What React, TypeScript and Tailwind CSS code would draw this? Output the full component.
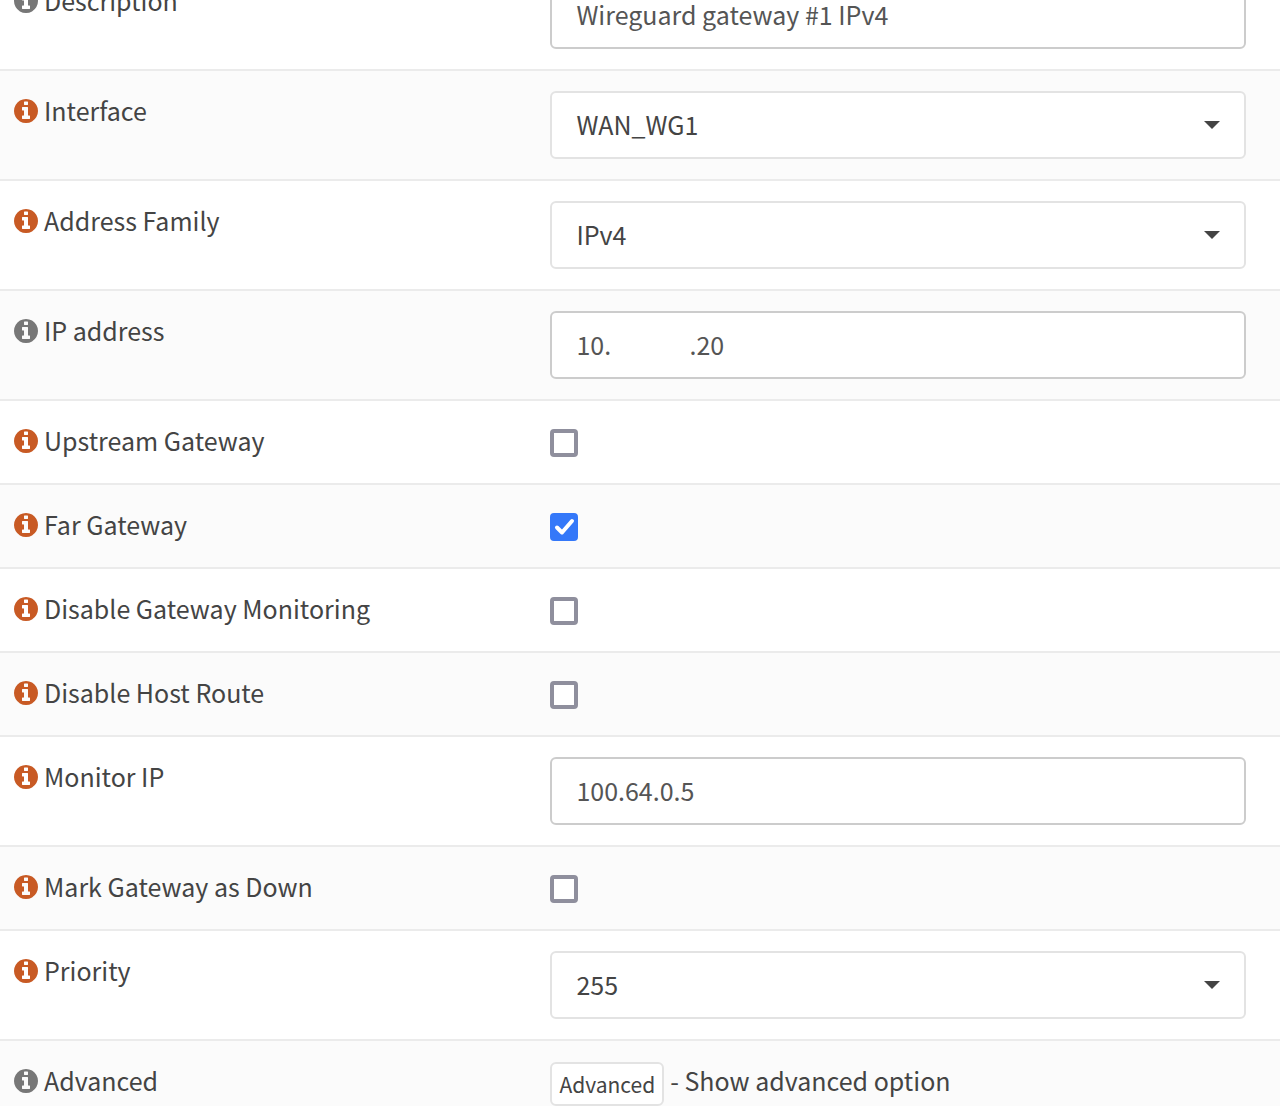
import type { ReactNode } from "react";

type Field = {
  id: string;
  label: string;
  kind: "text" | "select" | "checkbox" | "advanced";
  value?: string;
  checked?: boolean;
  muted?: boolean;
};

const fields: Field[] = [
  { id: "description", label: "Description", kind: "text", value: "Wireguard gateway #1 IPv4", muted: true },
  { id: "interface", label: "Interface", kind: "select", value: "WAN_WG1" },
  { id: "family", label: "Address Family", kind: "select", value: "IPv4" },
  { id: "ip", label: "IP address", kind: "text", value: "10." + " ".repeat(14) + ".20", muted: true },
  { id: "upstream", label: "Upstream Gateway", kind: "checkbox" },
  { id: "far", label: "Far Gateway", kind: "checkbox", checked: true },
  { id: "nomonitor", label: "Disable Gateway Monitoring", kind: "checkbox" },
  { id: "noroute", label: "Disable Host Route", kind: "checkbox" },
  { id: "monitor", label: "Monitor IP", kind: "text", value: "100.64.0.5" },
  { id: "down", label: "Mark Gateway as Down", kind: "checkbox" },
  { id: "priority", label: "Priority", kind: "select", value: "255" },
  { id: "advanced", label: "Advanced", kind: "advanced", muted: true },
];

function InfoIcon() {
  return (
    <svg viewBox="0 128 1536 1536" className="size-6" fill="currentColor" aria-hidden="true">
      <path d="M1024 1376v-160q0-14-9-23t-23-9h-96v-512q0-14-9-23t-23-9h-320q-14 0-23 9t-9 23v160q0 14 9 23t23 9h96v320h-96q-14 0-23 9t-9 23v160q0 14 9 23t23 9h448q14 0 23-9t9-23zm-128-896v-160q0-14-9-23t-23-9h-192q-14 0-23 9t-9 23v160q0 14 9 23t23 9h192q14 0 23-9t9-23zm640 416q0 209-103 385.5t-279.5 279.5-385.5 103-385.5-103-279.5-279.5-103-385.5 103-385.5 279.5-279.5 385.5-103 385.5 103 279.5 279.5 103 385.5z" />
    </svg>
  );
}

function SelectBox({ id, value }: { id: string; value?: string }) {
  return (
    <div className="relative">
      <select
        id={id}
        className="block h-[68px] w-full appearance-none rounded-md border-2 border-[#e3e3e3] bg-white px-6 text-[#444]"
      >
        <option>{value}</option>
      </select>
      <svg
        viewBox="0 0 16 8"
        className="pointer-events-none absolute top-[30px] right-[26px] h-2 w-4 text-[#444]"
        fill="currentColor"
        aria-hidden="true"
      >
        <path d="M0 0h16L8 8z" />
      </svg>
    </div>
  );
}

function CheckBox({ id, checked }: { id: string; checked?: boolean }) {
  return (
    <div className="flex h-[42px] items-center pt-0.5">
      <div className="relative size-7">
        <input
          id={id}
          type="checkbox"
          defaultChecked={checked}
          className="peer block size-7 appearance-none rounded-sm border-4 border-[#8f8f9d] bg-white checked:border-[#3478f9] checked:bg-[#3478f9]"
        />
        <svg
          viewBox="0 0 28 28"
          className="pointer-events-none absolute inset-0 hidden size-7 text-white peer-checked:block"
          fill="none"
          stroke="currentColor"
          strokeWidth="4"
          strokeLinecap="round"
          strokeLinejoin="round"
          aria-hidden="true"
        >
          <path d="M7 14.5l5 5L22 8" />
        </svg>
      </div>
    </div>
  );
}

function control(field: Field): ReactNode {
  switch (field.kind) {
    case "select":
      return <SelectBox id={field.id} value={field.value} />;
    case "checkbox":
      return <CheckBox id={field.id} checked={field.checked} />;
    case "advanced":
      return (
        <div className="flex items-start gap-1.5">
          <button
            id={field.id}
            type="button"
            className="mt-px h-11 rounded-md border-2 border-[#e3e3e3] bg-white px-[7px] text-[21px] leading-10"
          >
            Advanced
          </button>
          <span className="leading-[38px]">- Show advanced option</span>
        </div>
      );
    default:
      return (
        <input
          id={field.id}
          type="text"
          defaultValue={field.value}
          className="block h-[68px] w-full rounded-md border-2 border-[#ccc] bg-white px-6 pb-0.5 text-[#555]"
        />
      );
  }
}

export default function App() {
  return (
    <main className="h-screen overflow-hidden bg-white font-['Noto_Sans_CJK_SC',sans-serif] text-[25px] text-[#444]">
      <form className="-mt-[41px]">
        {fields.map((field) => (
          <div key={field.id} className="flex items-start border-t-2 border-[#ebebeb] py-5 even:bg-[#fbfbfb]">
            <div className="flex w-[43%] shrink-0 items-start gap-1.5 pl-3.5">
              <span className={field.muted ? "pt-2 text-[#777]" : "pt-2 text-[#c85a24]"}>
                <InfoIcon />
              </span>
              <label htmlFor={field.id} className="leading-[38px]">
                {field.label}
              </label>
            </div>
            <div className="min-w-0 flex-1 pr-[34px]">{control(field)}</div>
          </div>
        ))}
      </form>
    </main>
  );
}
